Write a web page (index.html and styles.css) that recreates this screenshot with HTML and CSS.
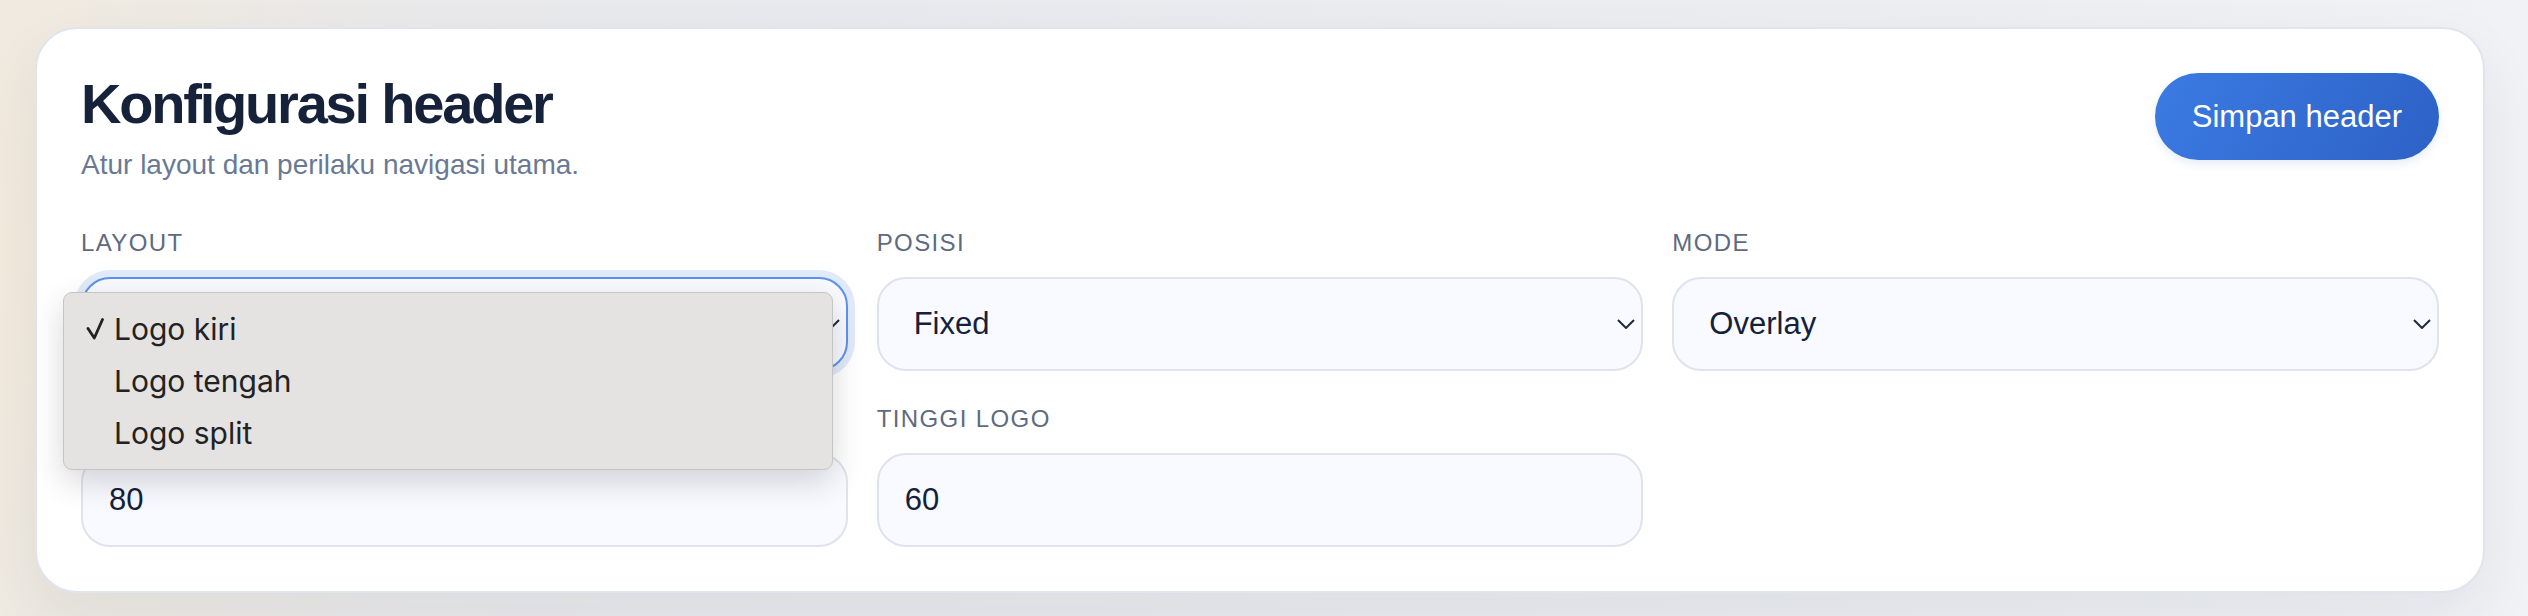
FILE: index.html
```html
<!DOCTYPE html>
<html lang="id">
<head>
  <meta charset="UTF-8" />
  <meta name="viewport" content="width=device-width, initial-scale=1.0" />
  <title>Konfigurasi header</title>
  <link rel="stylesheet" href="styles.css">
</head>
<body>
  <section class="panel">
    <div class="panel-head">
      <div>
        <h1>Konfigurasi header</h1>
        <p class="subtitle">Atur layout dan perilaku navigasi utama.</p>
      </div>
      <button class="btn-save">Simpan header</button>
    </div>

    <div class="fields">
      <div class="field">
        <label for="layout">Layout</label>
        <div class="select-wrap">
          <select id="layout" class="control is-focused">
            <option selected>Logo kiri</option>
            <option>Logo tengah</option>
            <option>Logo split</option>
          </select>
          <span class="chevron"><svg width="18" height="10" viewBox="0 0 18 10"><polyline points="1,1 9,9 17,1" /></svg></span>
          <ul class="dropdown">
            <li><svg class="check" width="18" height="22" viewBox="0 0 18 22"><polyline points="2,10.5 8.3,20 16.5,1.5" /></svg>Logo kiri</li>
            <li>Logo tengah</li>
            <li>Logo split</li>
          </ul>
        </div>
      </div>

      <div class="field">
        <label for="posisi">Posisi</label>
        <div class="select-wrap">
          <select id="posisi" class="control">
            <option selected>Fixed</option>
            <option>Sticky</option>
            <option>Static</option>
          </select>
          <span class="chevron"><svg width="18" height="10" viewBox="0 0 18 10"><polyline points="1,1 9,9 17,1" /></svg></span>
        </div>
      </div>

      <div class="field">
        <label for="mode">Mode</label>
        <div class="select-wrap">
          <select id="mode" class="control">
            <option selected>Overlay</option>
            <option>Solid</option>
            <option>Transparan</option>
          </select>
          <span class="chevron"><svg width="18" height="10" viewBox="0 0 18 10"><polyline points="1,1 9,9 17,1" /></svg></span>
        </div>
      </div>

      <div class="field">
        <!-- label sits under the open menu -->
        <label for="tinggi-header" class="is-covered">Tinggi header</label>
        <input id="tinggi-header" class="control" type="number" value="80">
      </div>

      <div class="field">
        <label for="tinggi-logo">Tinggi logo</label>
        <input id="tinggi-logo" class="control" type="number" value="60">
      </div>
    </div>
  </section>
</body>
</html>
```

FILE: styles.css
```css
html, body {
  height: 100%;
}
body {
  margin: 0;
  padding: 27px 43px 0 35px;
  box-sizing: border-box;
  font-family: "Liberation Sans", Arial, sans-serif;
  background:
    radial-gradient(ellipse 420px 700px at 0 40%, rgba(243, 234, 220, 0.9), rgba(243, 234, 220, 0) 100%),
    linear-gradient(90deg, #ebe9e6 0%, #e8e9ee 30%, #eceef2 80%, #f1f2f6 100%);
}
.panel {
  background: #fff;
  border: 2px solid #dfe4ee;
  border-radius: 42px;
  padding: 44px;
  box-shadow: 0 24px 60px rgba(30, 41, 59, 0.07);
}
.panel-head {
  display: flex;
  justify-content: space-between;
  align-items: flex-start;
  margin-bottom: 48px;
}
h1 {
  margin: 0;
  font-size: 56px;
  line-height: 1.1;
  font-weight: 700;
  letter-spacing: -2.2px;
  color: #16213a;
}
.subtitle {
  margin: 14px 0 0;
  font-size: 28px;
  color: #6a7993;
}
.btn-save {
  height: 87px;
  padding: 0 37px;
  border: none;
  border-radius: 44px;
  background: linear-gradient(120deg, #3b7be2 0%, #2d61c6 100%);
  color: #fff;
  font-family: inherit;
  font-size: 31px;
  cursor: pointer;
  box-shadow: 0 4px 10px rgba(45, 97, 198, 0.12);
}
.btn-save:hover {
  background: #2d61c6;
}
.fields {
  display: grid;
  grid-template-columns: repeat(3, 1fr);
  column-gap: 29px;
  row-gap: 34px;
}
.field label {
  display: block;
  margin-bottom: 20px;
  font-size: 24px;
  text-transform: uppercase;
  letter-spacing: 1.4px;
  color: #5e6a80;
}
.field label.is-covered {
  visibility: hidden;
}
.select-wrap {
  position: relative;
}
.control {
  display: block;
  width: 100%;
  height: 94px;
  box-sizing: border-box;
  margin: 0;
  padding: 0 26px;
  border: 2px solid #dfe3ec;
  border-radius: 29px;
  background: #f8faff;
  font-family: inherit;
  font-size: 31px;
  color: #15213a;
  outline: none;
  -webkit-appearance: none;
  appearance: none;
}
select.control {
  padding: 0 40px 0 35px;
}
.control.is-focused {
  border-color: #5b93ee;
  box-shadow: 0 0 0 7px #e1eafa;
}
.chevron {
  position: absolute;
  right: 8px;
  top: 50%;
  margin-top: -5px;
  line-height: 0;
  pointer-events: none;
}
.chevron polyline {
  fill: none;
  stroke: #1f2a3c;
  stroke-width: 2;
}
.dropdown {
  position: absolute;
  z-index: 10;
  left: -18px;
  top: 15px;
  width: 770px;
  box-sizing: border-box;
  margin: 0;
  padding: 10px 0;
  list-style: none;
  background: #e4e3e1;
  border: 1px solid #c6c5c3;
  border-radius: 9px;
  box-shadow: 0 12px 32px rgba(0, 0, 0, 0.16);
  font-family: Inter, "Noto Sans", sans-serif;
  font-size: 30px;
  color: #222;
}
.dropdown li {
  position: relative;
  height: 52px;
  line-height: 52px;
  padding-left: 50px;
}
.check {
  position: absolute;
  left: 22px;
  top: 15px;
}
.check polyline {
  fill: none;
  stroke: #222;
  stroke-width: 2.8;
  stroke-linecap: round;
  stroke-linejoin: round;
}
```
